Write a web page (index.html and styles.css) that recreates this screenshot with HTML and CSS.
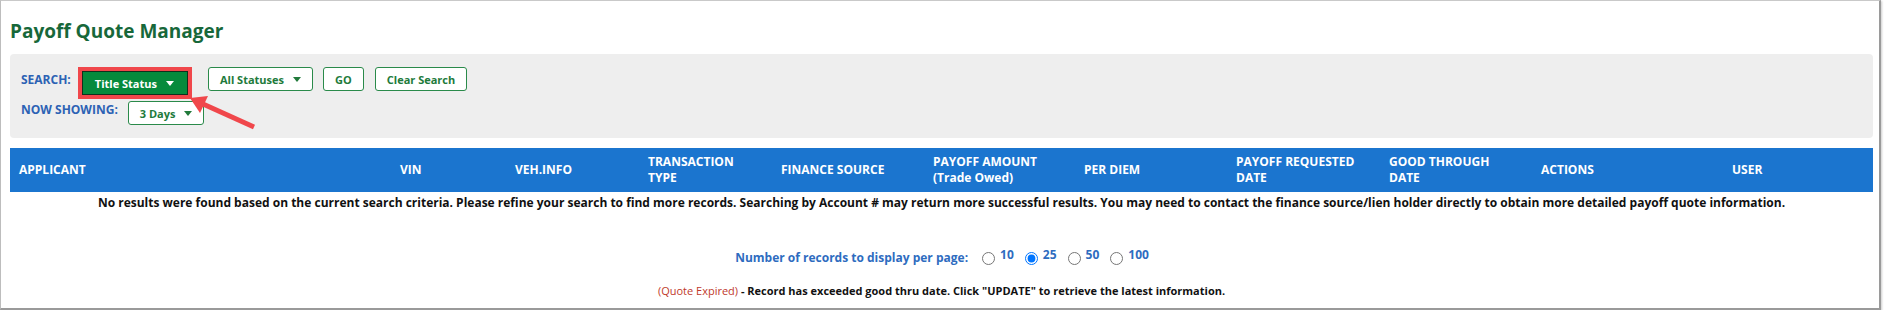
FILE: index.html
```html
<!DOCTYPE html>
<html>
<head>
  <title>Payoff Quote Manager</title>
  <link rel="stylesheet" href="styles.css">
</head>
<body>
  <div class="frame">
    <h1 class="title">Payoff Quote Manager</h1>

    <div class="search-panel">
      <div class="search-row">
        <span class="search-label">SEARCH:</span>
        <span class="highlight">
          <button class="btn btn-solid">Title Status <span class="caret"></span></button>
        </span>
        <button class="btn btn-outline btn-statuses">All Statuses <span class="caret"></span></button>
        <button class="btn btn-outline btn-go">GO</button>
        <button class="btn btn-outline btn-clear">Clear Search</button>
      </div>
      <div class="search-row second">
        <span class="search-label now">NOW SHOWING:</span>
        <button class="btn btn-outline">3 Days <span class="caret"></span></button>
      </div>
    </div>

    <div class="table-head">
      <div>APPLICANT</div>
      <div>VIN</div>
      <div>VEH.INFO</div>
      <div>TRANSACTION<br>TYPE</div>
      <div>FINANCE SOURCE</div>
      <div>PAYOFF AMOUNT<br>(Trade Owed)</div>
      <div>PER DIEM</div>
      <div>PAYOFF REQUESTED<br>DATE</div>
      <div>GOOD THROUGH<br>DATE</div>
      <div>ACTIONS</div>
      <div>USER</div>
    </div>

    <p class="no-results">No results were found based on the current search criteria. Please refine your search to find more records. Searching by Account # may return more successful results. You may need to contact the finance source/lien holder directly to obtain more detailed payoff quote information.</p>

    <div class="per-page">
      <span class="per-page-label">Number of records to display per page:</span>
      <label class="opt"><input type="radio" name="pp"><sup>10</sup></label>
      <label class="opt"><input type="radio" name="pp" checked><sup>25</sup></label>
      <label class="opt"><input type="radio" name="pp"><sup>50</sup></label>
      <label class="opt"><input type="radio" name="pp"><sup>100</sup></label>
    </div>

    <p class="legend"><span class="expired">(Quote Expired)</span> - Record has exceeded good thru date. Click "UPDATE" to retrieve the latest information.</p>

    <svg class="arrow" width="300" height="150" viewBox="0 0 300 150">
      <line x1="254" y1="127" x2="203" y2="104" stroke="#f0474b" stroke-width="5"/>
      <polygon points="190,98 208,96 200,113" fill="#f0474b"/>
    </svg>
  </div>
</body>
</html>
```

FILE: styles.css
```css
body {
  margin: 0;
  background: #ffffff;
  font-family: "Open Sans", Arial, sans-serif;
}

.frame {
  position: relative;
  box-sizing: border-box;
  width: 1881px;
  height: 310px;
  padding: 0 6px 0 9px;
  border-left: 1px solid #bdbdbd;
  border-top: 1px solid #c9c9c9;
  border-right: 2px solid #9a9a9a;
  border-bottom: 2px solid #9a9a9a;
  box-shadow: 1px 1px 2px rgba(0, 0, 0, 0.2);
}

.title {
  margin: 0;
  padding-top: 16px;
  font-size: 19px;
  line-height: 28px;
  font-weight: bold;
  color: #17683a;
}

.search-panel {
  margin-top: 9px;
  padding: 13px 11px 13px;
  background: #eeeeee;
  border-radius: 4px;
}

.search-row {
  display: flex;
  align-items: flex-start;
}

.search-row.second {
  margin-top: 2px;
}

.search-label {
  font-size: 12px;
  font-weight: bold;
  line-height: 26px;
  color: #2c62b4;
  margin-right: 7px;
}

.search-label.now {
  line-height: 18px;
  margin-right: 10px;
}

.highlight {
  display: inline-flex;
  border: 4px solid #f0474b;
  margin-right: 16px;
}

.btn {
  box-sizing: border-box;
  height: 24px;
  padding: 0 11px;
  font-family: "Open Sans", Arial, sans-serif;
  font-size: 11px;
  font-weight: bold;
  border-radius: 3px;
  display: inline-flex;
  align-items: center;
  cursor: pointer;
}

.btn-solid {
  background: #068a3c;
  color: #ffffff;
  border: 1px solid #10301c;
  border-radius: 0;
  padding: 0 13px 0 12px;
}

.btn-outline {
  background: #ffffff;
  color: #217a3b;
  border: 1px solid #2a8a4a;
}

.btn-go {
  margin-left: 10px;
}

.btn-clear {
  margin-left: 11px;
}

.caret {
  display: inline-block;
  width: 0;
  height: 0;
  margin-left: 9px;
  border-left: 4px solid transparent;
  border-right: 4px solid transparent;
  border-top: 5px solid currentColor;
}

.table-head {
  margin-top: 10px;
  height: 44px;
  padding-left: 9px;
  background: #1b75cf;
  color: #ffffff;
  font-size: 12px;
  font-weight: bold;
  line-height: 16px;
  display: grid;
  grid-template-columns: 381px 115px 133px 133px 152px 151px 152px 153px 152px 191px 1fr;
  align-items: center;
}

.no-results {
  margin: 2px 0 0;
  text-align: center;
  font-size: 12px;
  font-weight: bold;
  line-height: 18px;
  color: #111111;
}

.per-page {
  margin-top: 34px;
  height: 22px;
  display: flex;
  justify-content: center;
  align-items: center;
  padding-left: 9px;
}

.per-page-label {
  font-size: 12px;
  font-weight: bold;
  color: #2e6cbf;
  margin-right: 11px;
}

.opt {
  display: inline-flex;
  align-items: center;
  font-size: 12px;
  font-weight: bold;
  color: #2e6cbf;
  margin-right: 8px;
}

.opt input {
  margin: 3px 5px 0 3px;
  width: 13px;
  height: 13px;
}

.opt sup {
  font-size: 12px;
  position: relative;
  top: -3px;
  vertical-align: baseline;
}

.legend {
  margin: 14px 0 0;
  text-align: center;
  font-size: 11px;
  font-weight: bold;
  line-height: 18px;
  color: #111111;
}

.expired {
  font-weight: normal;
  color: #c0392b;
}

.arrow {
  position: absolute;
  left: -1px;
  top: -1px;
}
```
